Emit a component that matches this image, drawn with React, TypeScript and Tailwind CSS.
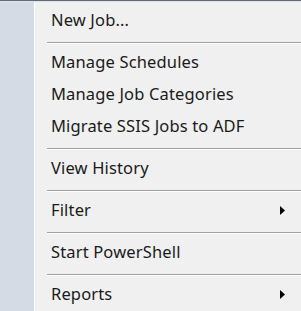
const items: Array<{ label?: string; sub?: boolean; sep?: boolean }> = [
  { label: 'New Job...' },
  { sep: true },
  { label: 'Manage Schedules' },
  { label: 'Manage Job Categories' },
  { label: 'Migrate SSIS Jobs to ADF' },
  { sep: true },
  { label: 'View History' },
  { sep: true },
  { label: 'Filter', sub: true },
  { sep: true },
  { label: 'Start PowerShell' },
  { sep: true },
  { label: 'Reports', sub: true },
];

const Arrow = () => (
  <svg width="5" height="9" viewBox="0 0 5 9" className="mr-[16px]">
    <path d="M0 0 L5 4.5 L0 9 Z" fill="#000" />
  </svg>
);

export default function App() {
  return (
    <div className="w-[301px] h-[311px] overflow-hidden bg-[#f0f0f0] flex flex-col font-['Noto_Sans',sans-serif]">
      {/* top border */}
      <div className="h-px bg-[#646a73] shrink-0" />
      <div className="h-px bg-[#dbe3ec] shrink-0" />
      <div className="flex flex-1">
        {/* icon gutter */}
        <div className="w-[34px] bg-[#d5dbe4] shrink-0" />
        <div className="w-px bg-white shrink-0" />
        <div className="flex-1 flex flex-col pt-[2px]">
          {items.map((it, i) =>
            it.sep ? (
              <div key={i} className="h-[10px] flex flex-col pt-[6px] pl-[12px]">
                <div className="h-px bg-[#a0a0a0]" />
                <div className="h-px bg-white" />
              </div>
            ) : (
              <div key={i} className="h-[32px] flex items-center justify-between pl-[16px]">
                <span className="text-[16.5px] tracking-[0.15px] text-[#1a1a1a] leading-none">{it.label}</span>
                {it.sub && <Arrow />}
              </div>
            )
          )}
        </div>
      </div>
    </div>
  );
}
